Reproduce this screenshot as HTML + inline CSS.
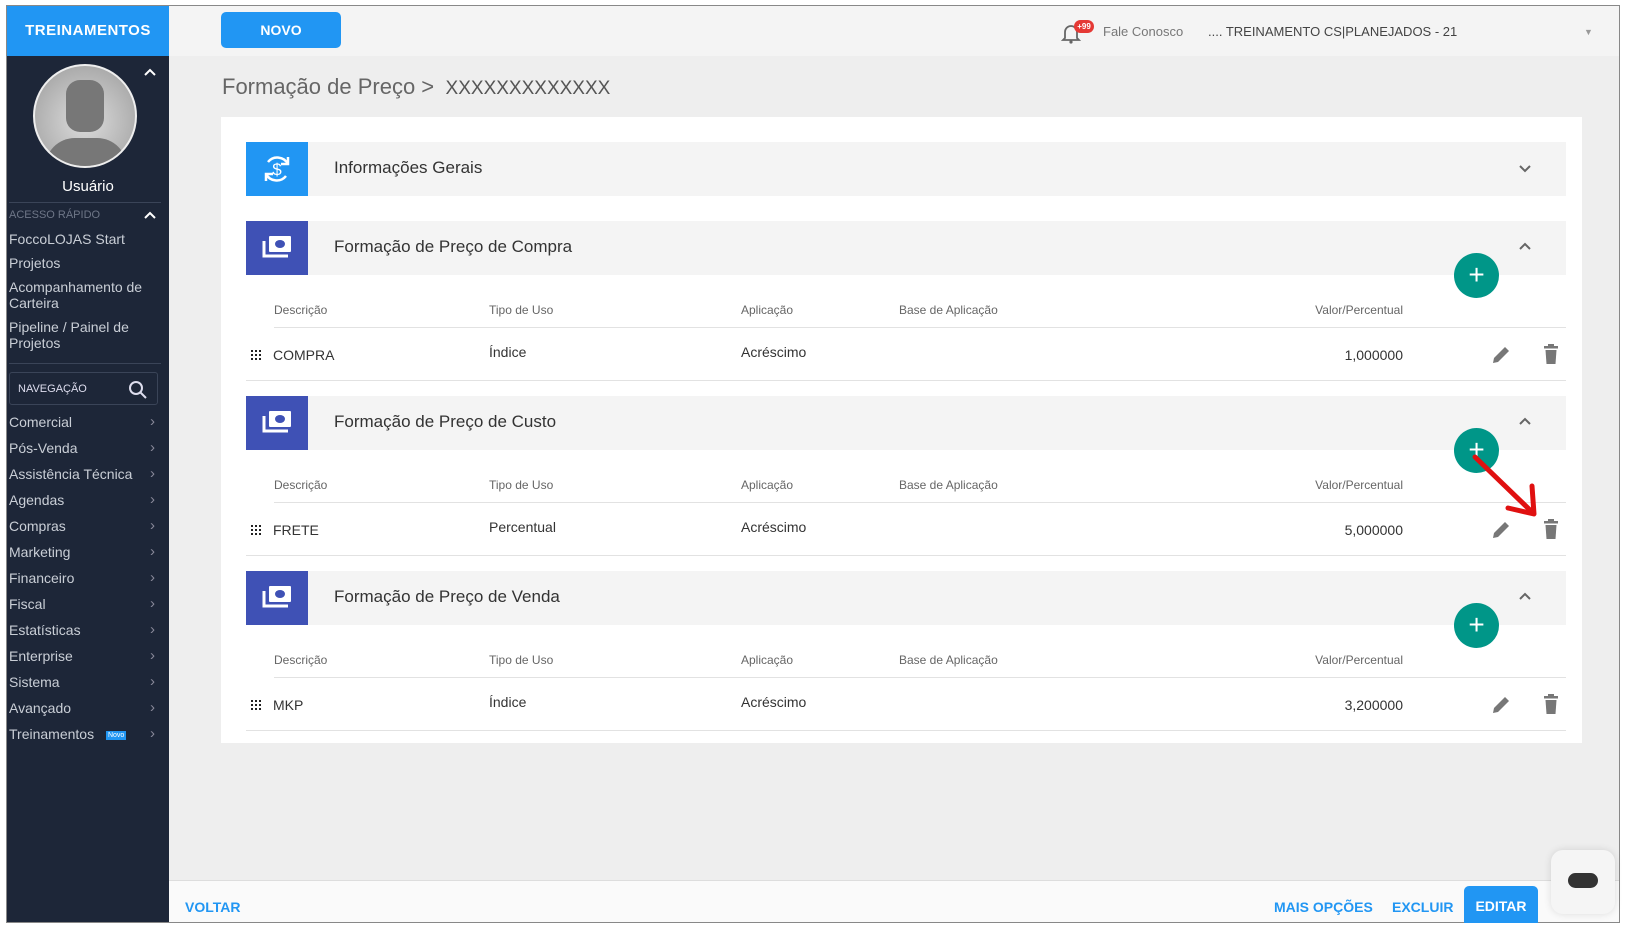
<!DOCTYPE html>
<html><head><meta charset="utf-8"><style>
*{box-sizing:border-box;margin:0;padding:0}
body{width:1628px;height:927px;background:#fff;font-family:"Liberation Sans","DejaVu Sans",sans-serif;position:relative;overflow:hidden}
.a{position:absolute}
.frame{left:6px;top:5px;width:1614px;height:918px;border:1px solid #888;background:#eee}
.side{left:7px;top:6px;width:162px;height:916px;background:#1d2638}
.sb{color:#c9ced6;font-size:14px;left:9px}
.th{font-size:12px;color:#666}
.td{font-size:14px;color:#333}
.hdr{left:246px;width:1320px;height:54px;background:#f4f4f4}
.ico{left:0;top:0;width:62px;height:54px;background:#3f51b5}
.ht{left:88px;top:16px;font-size:17px;color:#333}
.plus{width:45px;height:45px;border-radius:50%;background:#009688;color:#fff;font-size:28px;text-align:center;line-height:43px}
.line{left:246px;width:1320px;height:1px;background:#e2e2e2}
</style></head><body>
<div class="a frame"></div>
<div class="a side"></div>
<div class="a" style="left:7px;top:6px;width:162px;height:50px;background:#2196f3;color:#fff;font-weight:bold;font-size:15px;text-align:center;line-height:50px;letter-spacing:.5px">TREINAMENTOS</div>
<div class="a" style="left:169px;top:6px;width:1450px;height:50px;background:#f4f4f4"></div>
<div class="a" style="left:221px;top:12px;width:120px;height:36px;background:#2196f3;border-radius:5px;color:#fff;font-weight:bold;font-size:14px;text-align:center;line-height:36px">NOVO</div>
<svg class="a" style="left:1061px;top:22px" width="20" height="22" viewBox="0 0 20 22"><path d="M4 16V10a6 6 0 0 1 12 0v6l2 2H2z" fill="none" stroke="#666" stroke-width="1.8"/><circle cx="10" cy="20" r="1.6" fill="#666"/></svg>
<div class="a" style="left:1074px;top:20px;width:20px;height:13px;border-radius:7px;background:#e53935;color:#fff;font-size:8px;font-weight:bold;text-align:center;line-height:13px">+99</div>
<div class="a" style="left:1103px;top:24px;font-size:13px;color:#777">Fale Conosco</div>
<div class="a" style="left:1208px;top:24px;font-size:13px;color:#444">.... TREINAMENTO CS|PLANEJADOS - 21</div>
<div class="a" style="left:1584px;top:27px;font-size:9px;color:#999">▼</div>
<!-- sidebar -->
<div class="a" style="left:33px;top:64px;width:104px;height:104px;border-radius:50%;border:2px solid #eee;background:radial-gradient(circle at 50% 55%,#ddd,#999);overflow:hidden">
<div class="a" style="left:31px;top:14px;width:38px;height:52px;border-radius:14px;background:#777"></div>
<div class="a" style="left:10px;top:72px;width:82px;height:40px;border-radius:30px 30px 0 0;background:#777"></div></div>
<svg class="a" style="left:143px;top:67px" width="14" height="10"><path d="M2 8L7 3L12 8" fill="none" stroke="#fff" stroke-width="2"/></svg>
<div class="a" style="left:7px;top:178px;width:162px;text-align:center;color:#fff;font-size:15px">Usuário</div>
<div class="a" style="left:9px;top:202px;width:152px;height:1px;background:#3a4458"></div>
<div class="a" style="left:9px;top:209px;font-size:11px;color:#6e7687">ACESSO RÁPIDO</div>
<svg class="a" style="left:143px;top:210px" width="14" height="10"><path d="M2 8L7 3L12 8" fill="none" stroke="#fff" stroke-width="2"/></svg>
<div class="a sb" style="top:231px">FoccoLOJAS Start</div>
<div class="a sb" style="top:255px">Projetos</div>
<div class="a sb" style="top:279px;line-height:16px">Acompanhamento de<br>Carteira</div>
<div class="a sb" style="top:319px;line-height:16px">Pipeline / Painel de<br>Projetos</div>
<div class="a" style="left:9px;top:363px;width:152px;height:1px;background:#3a4458"></div>
<div class="a" style="left:9px;top:372px;width:149px;height:33px;border:1px solid #3a4458;border-radius:3px"></div>
<div class="a" style="left:18px;top:383px;font-size:11px;color:#dde">NAVEGAÇÃO</div>
<svg class="a" style="left:128px;top:380px" width="20" height="20"><circle cx="8" cy="8" r="6" fill="none" stroke="#dde" stroke-width="2"/><path d="M12.5 12.5L18 18" stroke="#dde" stroke-width="2"/></svg>
<div class="a" style="left:9px;top:409px;line-height:26px;font-size:14px;color:#c9ced6">Comercial<br>Pós-Venda<br>Assistência Técnica<br>Agendas<br>Compras<br>Marketing<br>Financeiro<br>Fiscal<br>Estatísticas<br>Enterprise<br>Sistema<br>Avançado<br>Treinamentos <span style="display:inline-block;background:#2196f3;color:#fff;font-size:7px;line-height:9px;padding:0 2px;vertical-align:middle;margin-left:8px">Novo</span></div>
<div class="a" style="left:150px;top:409px;line-height:26px;font-size:15px;color:#889">›<br>›<br>›<br>›<br>›<br>›<br>›<br>›<br>›<br>›<br>›<br>›<br>›</div>
<!-- main -->
<div class="a" style="left:222px;top:74px;font-size:22px;color:#666">Formação de Preço &gt; <span style="font-size:19px;color:#555">&nbsp;XXXXXXXXXXXXX</span></div>
<div class="a" style="left:221px;top:117px;width:1361px;height:626px;background:#fff"></div>
<div class="a hdr" style="top:142px"><div class="a ico" style="background:#2196f3"><svg class="a" style="left:14px;top:10px" width="34" height="34" viewBox="0 0 34 34"><path d="M8 10a12 12 0 0 1 20 2M26 24a12 12 0 0 1-20-2" fill="none" stroke="#fff" stroke-width="2.5"/><path d="M28 5v7h-7M6 29v-7h7" fill="none" stroke="#fff" stroke-width="2.5"/><text x="17" y="23" font-size="17" fill="#fff" text-anchor="middle" font-family="Liberation Sans">$</text></svg></div><div class="a ht">Informações Gerais</div><svg class="a" style="left:1272px;top:22px" width="14" height="10"><path d="M2 2L7 7L12 2" fill="none" stroke="#666" stroke-width="2"/></svg></div>

<div id="s"></div>
<script>
var secs=[[221,"Formação de Preço de Compra","COMPRA","Índice","1,000000"],[396,"Formação de Preço de Custo","FRETE","Percentual","5,000000"],[571,"Formação de Preço de Venda","MKP","Índice","3,200000"]];
var h="";
secs.forEach(function(s){var t=s[0];
h+='<div class="a hdr" style="top:'+t+'px"><div class="a ico"><svg class="a" style="left:15px;top:12px" width="32" height="30" viewBox="0 0 32 30"><rect x="8" y="3" width="22" height="16" rx="1" fill="#fff"/><ellipse cx="19" cy="11" rx="5" ry="4" fill="#3f51b5"/><path d="M3 8v15h24" fill="none" stroke="#fff" stroke-width="3"/></svg></div><div class="a ht">'+s[1]+'</div><svg class="a" style="left:1272px;top:20px" width="14" height="10"><path d="M2 8L7 3L12 8" fill="none" stroke="#666" stroke-width="2"/></svg></div>';
h+='<div class="a plus" style="left:1454px;top:'+(t+32)+'px">+</div>';
var y=t+82;
h+='<div class="a th" style="left:274px;top:'+y+'px">Descrição</div><div class="a th" style="left:489px;top:'+y+'px">Tipo de Uso</div><div class="a th" style="left:741px;top:'+y+'px">Aplicação</div><div class="a th" style="left:899px;top:'+y+'px">Base de Aplicação</div><div class="a th" style="left:1250px;width:153px;text-align:right;top:'+y+'px">Valor/Percentual</div>';
h+='<div class="a" style="left:274px;top:'+(t+106)+'px;width:1292px;height:1px;background:#e2e2e2"></div>';
var r=t+125;
h+='<svg class="a" style="left:251px;top:'+(r+4)+'px" width="11" height="11"><g fill="#222"><rect x="0" y="0" width="2" height="2"/><rect x="4" y="0" width="2" height="2"/><rect x="8" y="0" width="2" height="2"/><rect x="0" y="4" width="2" height="2"/><rect x="4" y="4" width="2" height="2"/><rect x="8" y="4" width="2" height="2"/><rect x="0" y="8" width="2" height="2"/><rect x="4" y="8" width="2" height="2"/><rect x="8" y="8" width="2" height="2"/></g></svg>';
h+='<div class="a td" style="left:273px;top:'+(r+1)+'px">'+s[2]+'</div><div class="a td" style="left:489px;top:'+(r-2)+'px">'+s[3]+'</div><div class="a td" style="left:741px;top:'+(r-2)+'px">Acréscimo</div><div class="a td" style="left:1250px;width:153px;text-align:right;top:'+(r+1)+'px">'+s[4]+'</div>';
h+='<svg class="a" style="left:1490px;top:'+(r-2)+'px" width="22" height="22" viewBox="0 0 22 22"><path d="M3 19l1-5 11-11 4 4-11 11z" fill="#777"/></svg>';
h+='<svg class="a" style="left:1542px;top:'+(r-3)+'px" width="18" height="22" viewBox="0 0 18 22"><rect x="2" y="3" width="14" height="2.5" fill="#777"/><rect x="6" y="1" width="6" height="2" fill="#777"/><path d="M3.5 7h11l-1 14h-9z" fill="#777"/></svg>';
h+='<div class="a line" style="top:'+(t+159)+'px"></div>';});
document.getElementById("s").outerHTML=h;
</script>
<svg class="a" style="left:1470px;top:452px" width="80" height="70"><path d="M5 5L62 60" stroke="#e01010" stroke-width="5" stroke-linecap="round"/><path d="M38 56L64 62L62 34" fill="none" stroke="#e01010" stroke-width="5" stroke-linecap="round" stroke-linejoin="round"/></svg>
<div class="a" style="left:169px;top:880px;width:1450px;height:42px;background:#fafafa;border-top:1px solid #ddd"></div>
<div class="a" style="left:185px;top:899px;font-size:14px;font-weight:bold;color:#2196f3">VOLTAR</div>
<div class="a" style="left:1274px;top:899px;font-size:14px;font-weight:bold;color:#2196f3">MAIS OPÇÕES</div>
<div class="a" style="left:1392px;top:899px;font-size:14px;font-weight:bold;color:#2196f3">EXCLUIR</div>
<div class="a" style="left:1464px;top:886px;width:74px;height:37px;background:#2196f3;border-radius:5px 5px 0 0;color:#fff;font-weight:bold;font-size:14px;text-align:center;line-height:40px">EDITAR</div>
<div class="a" style="left:1551px;top:850px;width:64px;height:64px;background:#f5f5f5;border-radius:12px;box-shadow:0 0 8px rgba(0,0,0,.12)"></div>
<div class="a" style="left:1568px;top:873px;width:30px;height:15px;background:#333;border-radius:8px"></div>
</body></html>
